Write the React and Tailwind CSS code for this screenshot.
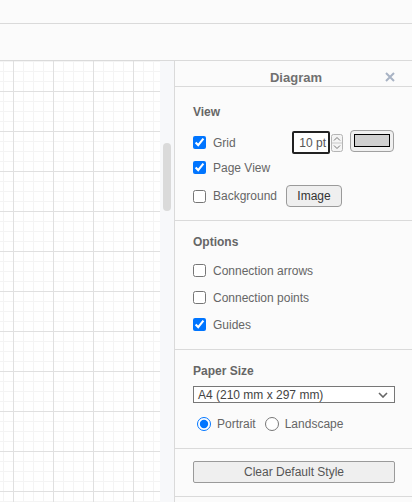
import { useState } from 'react'

// draw.io-style "Diagram" format panel next to a grid canvas

function Check({ label, checked }) {
  return (
    <label className="flex items-center h-[13px]">
      <input type="checkbox" defaultChecked={checked} className="m-0 w-[13px] h-[13px]" />
      <span className="ml-[7px] leading-[14px]">{label}</span>
    </label>
  )
}

function Spinner() {
  return (
    <svg width="12" height="18" viewBox="0 0 12 18" className="ml-px">
      <rect x="0.5" y="0.5" width="11" height="17" rx="2" fill="#f4f4f4" stroke="#b5b5b5" />
      <line x1="1" y1="9" x2="11" y2="9" stroke="#c8c8c8" />
      <path d="M3 6.5 L6 3.5 L9 6.5" fill="none" stroke="#777" strokeWidth="1" />
      <path d="M3 11.5 L6 14.5 L9 11.5" fill="none" stroke="#777" strokeWidth="1" />
    </svg>
  )
}

export default function App() {
  const [orientation, setOrientation] = useState('portrait')

  return (
    <div className="w-[412px] h-[502px] overflow-hidden flex flex-col bg-[#fbfbfb] text-[12px] text-[#666] font-['Liberation_Sans',Arial,sans-serif]">
      <div className="h-[24px] shrink-0 border-b border-[#dadada]" />
      <div className="h-[37px] shrink-0 border-b border-[#dadada]" />

      <div className="flex flex-1 min-h-0">
        {/* canvas */}
        <div className="w-[160px] shrink-0 bg-white bg-[linear-gradient(to_right,#e0e0e0_1px,transparent_1px),linear-gradient(to_bottom,#e0e0e0_1px,transparent_1px),linear-gradient(to_right,#f4f4f4_1px,transparent_1px),linear-gradient(to_bottom,#f4f4f4_1px,transparent_1px)] bg-size-[40px_40px,40px_40px,10px_10px,10px_10px] bg-position-[13px_30px]" />

        {/* scrollbar */}
        <div className="w-[14px] shrink-0 bg-[#f7f8fa] pt-[82px] pl-[3px]">
          <div className="w-[8px] h-[68px] rounded-full bg-[#dadada]" />
        </div>

        {/* format panel */}
        <div className="flex-1 border-l border-[#dadada] flex flex-col">
          <div className="h-[26px] shrink-0 border-b border-[#dadada] relative flex items-center justify-center">
            <span className="font-bold text-[13px] text-[#707070] pl-[5px] pt-[8px]">Diagram</span>
            <svg width="10" height="10" viewBox="0 0 10 10" className="absolute right-[17px] top-[11px]">
              <path d="M1 1 L9 9 M9 1 L1 9" stroke="#a8b3c4" strokeWidth="2" />
            </svg>
          </div>

          {/* View */}
          <div className="h-[134px] shrink-0 border-b border-[#dadada] pl-[18px] pt-[18px]">
            <div className="font-bold leading-[14px]">View</div>
            <div className="mt-[12px] flex items-center h-[23px]">
              <div className="w-[99px]"><Check label="Grid" checked /></div>
              <div className="w-[38px] h-[23px] border-2 border-[#222] bg-white rounded-[2px] flex items-center justify-end pr-[2px] text-[#555]">10 pt</div>
              <Spinner />
              <div className="ml-[7px] w-[44px] h-[22px] -mt-[4px] border border-[#a0a0a0] rounded-[4px] bg-[#f0f0f0] flex items-center justify-center">
                <div className="w-[36px] h-[13px] border border-black bg-[#d0d0d0]" />
              </div>
            </div>
            <div className="mt-[7px] h-[13px]"><Check label="Page View" checked /></div>
            <div className="mt-[11px] flex items-center h-[22px]">
              <div className="w-[93px]"><Check label="Background" /></div>
              <div className="w-[56px] h-[22px] border border-[#9a9a9a] rounded-[4px] bg-[#efefef] flex items-center justify-center text-[#333]">Image</div>
            </div>
          </div>

          {/* Options */}
          <div className="h-[129px] shrink-0 border-b border-[#dadada] pl-[18px] pt-[14px]">
            <div className="font-bold leading-[14px]">Options</div>
            <div className="mt-[15px] flex flex-col gap-[14px]">
              <Check label="Connection arrows" />
              <Check label="Connection points" />
              <Check label="Guides" checked />
            </div>
          </div>

          {/* Paper size */}
          <div className="h-[99px] shrink-0 border-b border-[#dadada] pl-[18px] pt-[14px]">
            <div className="font-bold leading-[14px]">Paper Size</div>
            <div className="mt-[8px] w-[202px] h-[17px] border border-[#777] bg-white flex items-center justify-between pl-[4px] pr-[6px] text-[#444]">
              <span className="leading-[14px]">A4 (210 mm x 297 mm)</span>
              <svg width="10" height="6" viewBox="0 0 10 6">
                <path d="M1 1 L5 5 L9 1" fill="none" stroke="#666" strokeWidth="1.6" />
              </svg>
            </div>
            <div className="mt-[14px] flex items-center h-[14px] pl-[4px]">
              <label className="flex items-center">
                <input type="radio" name="orient" checked={orientation === 'portrait'} onChange={() => setOrientation('portrait')} className="m-0 w-[14px] h-[14px]" />
                <span className="ml-[6px]">Portrait</span>
              </label>
              <label className="flex items-center ml-[9px]">
                <input type="radio" name="orient" checked={orientation === 'landscape'} onChange={() => setOrientation('landscape')} className="m-0 w-[14px] h-[14px]" />
                <span className="ml-[6px]">Landscape</span>
              </label>
            </div>
          </div>

          <div className="h-[48px] shrink-0 border-b border-[#dadada] pl-[18px] pt-[12px]">
            <div className="w-[202px] h-[22px] border border-[#9a9a9a] rounded-[2px] bg-[#efefef] flex items-center justify-center text-[#555]">Clear Default Style</div>
          </div>
        </div>
      </div>
    </div>
  )
}
